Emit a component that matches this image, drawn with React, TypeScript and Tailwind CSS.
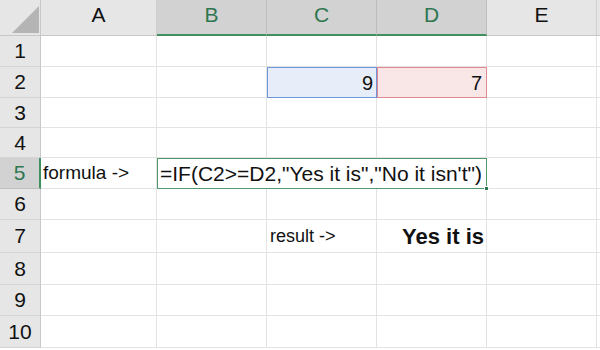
const cols = ['A', 'B', 'C', 'D', 'E'];
const selectedCols = ['B', 'C', 'D'];
const rows = [1, 2, 3, 4, 5, 6, 7, 8, 9, 10];

// full class names so Tailwind picks them up
const colStart = ['col-start-1', 'col-start-2', 'col-start-3', 'col-start-4', 'col-start-5', 'col-start-6', 'col-start-7'];
const rowStart = [
  'row-start-1', 'row-start-2', 'row-start-3', 'row-start-4', 'row-start-5', 'row-start-6',
  'row-start-7', 'row-start-8', 'row-start-9', 'row-start-10', 'row-start-11',
];

export default function App() {
  return (
    <div className="w-[600px] h-[350px] overflow-hidden bg-white font-['Liberation_Sans',Arial,sans-serif]">
      <div className="grid grid-cols-[41px_116px_110px_110px_110px_110px_3px] grid-rows-[36px_31px_31px_30px_30px_31px_31px_33px_32px_31px_32px]">
        {/* Corner */}
        <div className="col-start-1 row-start-1 bg-[#e6e6e6] border-r border-b border-[#c8c8c8] flex items-end justify-end pr-px pb-[2px]">
          <svg width="27" height="27" viewBox="0 0 27 27">
            <polygon points="27,0 27,27 0,27" fill="#b4b4b4" />
          </svg>
        </div>

        {/* Column headers */}
        {cols.map((c, ci) => {
          const sel = selectedCols.includes(c);
          return (
            <div
              key={c}
              className={`${colStart[ci + 1]} row-start-1 flex items-end justify-center text-[21px] ${
                sel
                  ? 'bg-[#d2d2d2] border-r border-[#bdbdbd] border-b-2 border-b-[#3f8f5f] pb-[4px] text-[#2e7650]'
                  : 'bg-[#e6e6e6] border-r border-[#d0d0d0] border-b border-b-[#c8c8c8] pb-[5px] text-[#111]'
              }`}
            >
              {c}
            </div>
          );
        })}
        <div className="col-start-7 row-start-1 bg-[#e6e6e6] border-b border-[#c8c8c8]" />

        {rows.map((r) => {
          const sel = r === 5;
          return [
            <div
              key={`h${r}`}
              className={`col-start-1 ${rowStart[r]} flex items-center justify-center text-[21px] ${
                sel
                  ? 'bg-[#d2d2d2] border-r-2 border-r-[#3f8f5f] border-b border-b-[#c0c0c0] text-[#2e7650]'
                  : 'bg-[#e6e6e6] border-r border-r-[#c8c8c8] border-b border-b-[#d4d4d4] text-[#111]'
              }`}
            >
              {r}
            </div>,
            ...cols.map((c, ci) => (
              <div key={`${c}${r}`} className={`${colStart[ci + 1]} ${rowStart[r]} border-r border-b border-[#e3e3e3]`} />
            )),
            <div key={`x${r}`} className={`col-start-7 ${rowStart[r]} border-b border-[#e3e3e3]`} />,
          ];
        })}

        {/* Row 2 values */}
        <div className="col-start-4 row-start-3 bg-[#e8eef9] border border-[#6f97dc] flex items-center justify-end pr-[3px] text-[20px] text-[#111]">
          9
        </div>
        <div className="col-start-5 row-start-3 bg-[#f9e6e7] border border-[#de8a90] flex items-center justify-end pr-[4px] text-[20px] text-[#111]">
          7
        </div>

        {/* Row 5 */}
        <div className="col-start-2 row-start-6 flex items-center pl-[2px] text-[19px] text-[#111]">
          formula -&gt;
        </div>
        <div className="col-start-3 col-end-6 row-start-6 relative border border-[#4f9a6c] flex items-center pl-[2px] text-[21px] text-[#111] bg-white whitespace-nowrap">
          =IF(C2&gt;=D2,"Yes it is","No it isn't")
          <span className="absolute right-[-3px] bottom-[-3px] w-[5px] h-[5px] bg-[#2f7d4e] border border-white" />
        </div>

        {/* Row 7 */}
        <div className="col-start-4 row-start-8 flex items-center pl-[3px] text-[18px] text-[#111]">
          result -&gt;
        </div>
        <div className="col-start-5 row-start-8 flex items-center justify-end pr-[3px] text-[22px] font-bold text-[#111]">
          Yes it is
        </div>
      </div>
    </div>
  );
}
